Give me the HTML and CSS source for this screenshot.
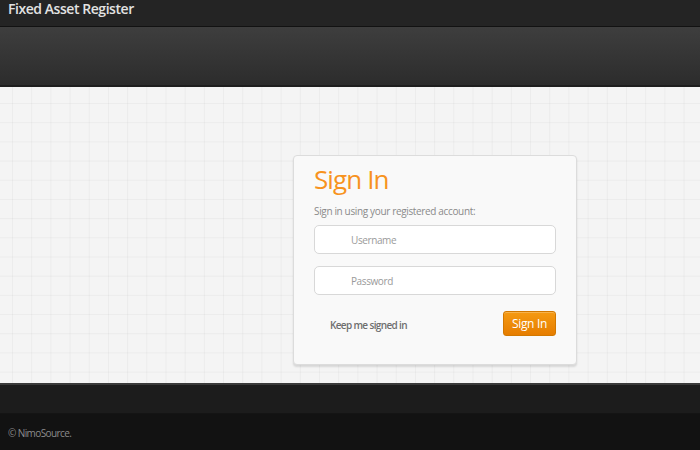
FILE: index.html
```html
<!DOCTYPE html>
<html>
<head>
<meta charset="utf-8">
<link rel="stylesheet" href="styles.css">
</head>
<body>
<header class="topbar">
  <div class="brand">Fixed Asset Register</div>
</header>
<div class="subbar"></div>
<main class="content">
  <form class="card">
    <h1 class="title">Sign In</h1>
    <p class="lead">Sign in using your registered account:</p>
    <div class="field"><input type="text" placeholder="Username"></div>
    <div class="field"><input type="password" placeholder="Password"></div>
    <div class="actions">
      <label class="keep">Keep me signed in</label>
      <button type="button" class="btn">Sign In</button>
    </div>
  </form>
</main>
<div class="footbar"></div>
<footer class="footer">© NimoSource.</footer>
</body>
</html>
```
FILE: styles.css
```css
* { box-sizing: border-box; }
html, body { margin: 0; padding: 0; }
body {
  font-family: "Open Sans", "Liberation Sans", sans-serif;
  background: #121212;
  width: 700px;
  height: 450px;
  overflow: hidden;
}
.topbar {
  height: 27px;
  background: #242424;
  border-bottom: 1px solid #121212;
  padding: 0 8px;
  display: flex;
  align-items: center;
}
.brand {
  color: #e2e2e2;
  font-size: 14px;
  font-weight: 600;
  letter-spacing: -0.45px;
  line-height: 1;
  margin-top: -9px;
}
.subbar {
  height: 60px;
  background: linear-gradient(#3e3e3e, #2c2c2c);
  border-bottom: 2px solid #1e1e1e;
}
.content {
  height: 296px;
  background-color: #f4f4f4;
  background-image:
    linear-gradient(to right, rgba(0,0,0,0.035) 1px, transparent 1px),
    linear-gradient(to bottom, rgba(0,0,0,0.035) 1px, transparent 1px);
  background-size: 19.2px 19.2px;
  background-position: 12px 16px;
  display: flex;
  justify-content: center;
  padding-top: 68px;
  padding-left: 170px;
}
.card {
  width: 284px;
  height: 210px;
  background: #f9f9f9;
  border: 1px solid #dcdcdc;
  border-radius: 4px;
  box-shadow: 0 2px 2px rgba(0,0,0,0.12);
  padding: 8px 20px 0 20px;
  margin: 0;
}
.title {
  margin: 0;
  color: #f7931e;
  font-size: 26px;
  font-weight: 400;
  letter-spacing: -0.9px;
  line-height: 30px;
}
.lead {
  margin: 10px 0 7px 0;
  color: #8a8a8a;
  font-size: 10px;
  letter-spacing: -0.35px;
  line-height: 14px;
}
.field { margin-bottom: 12px; }
.field input {
  width: 242px;
  height: 29px;
  border: 1px solid #d8d8d8;
  border-radius: 5px;
  background: #fff;
  padding: 0 0 0 36px;
  font-family: inherit;
  font-size: 10px;
  letter-spacing: -0.4px;
  color: #555;
  outline: none;
}
.field input::placeholder { color: #9a9a9a; }
.actions {
  display: flex;
  justify-content: space-between;
  align-items: center;
  width: 242px;
  margin-top: 16px;
  padding-left: 16px;
}
.keep {
  color: #6e6e6e;
  font-size: 10px;
  font-weight: 600;
  letter-spacing: -0.65px;
  margin-top: 2px;
}
.btn {
  width: 53px;
  height: 25px;
  border: 1px solid #d27800;
  border-radius: 3px;
  background: linear-gradient(#f59a12, #e67d00);
  color: #fff;
  font-family: inherit;
  font-size: 12px;
  letter-spacing: -0.3px;
  padding: 0;
  box-shadow: inset 0 1px 0 rgba(255,255,255,0.25);
}
.footbar {
  height: 31px;
  background: #1c1c1c;
  border-top: 2px solid #3a3a3a;
  border-bottom: 1px solid #141414;
}
.footer {
  height: 36px;
  background: #121212;
  color: #8c8c8c;
  font-size: 10px;
  letter-spacing: -0.6px;
  padding: 12px 8px 0 8px;
}
```
